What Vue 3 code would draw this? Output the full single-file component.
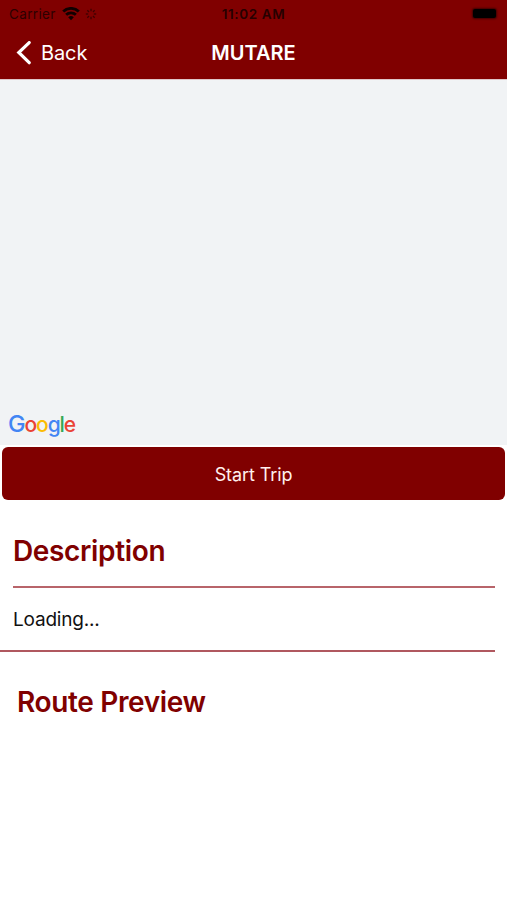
<script setup>
import { ref } from 'vue'

const title = ref('MUTARE')
const description = ref('Loading...')

const logo = [
  { char: 'G', color: '#4285f4' },
  { char: 'o', color: '#ea4335' },
  { char: 'o', color: '#fbbc05' },
  { char: 'g', color: '#4285f4' },
  { char: 'l', color: '#34a853' },
  { char: 'e', color: '#ea4335' }
]

const rays = [0, 45, 90, 135, 180, 225, 270, 315]
</script>

<template>
  <div class="screen">
    <header class="header">
      <div class="status-bar">
        <div class="status-left">
          <span class="carrier">Carrier</span>
          <svg class="wifi" width="18" height="14" viewBox="0 0 18 14">
            <path d="M1.2 4.6a11 11 0 0 1 15.6 0" />
            <path d="M4.1 7.8a7 7 0 0 1 9.8 0" />
            <path class="wifi-dot" d="M9 13.2 6.2 10.3a4 4 0 0 1 5.6 0z" />
          </svg>
          <svg class="spinner" width="12" height="12" viewBox="-6 -6 12 12">
            <line
              v-for="ray in rays"
              :key="ray"
              x1="0"
              y1="-2.8"
              x2="0"
              y2="-5.2"
              :transform="`rotate(${ray})`"
            />
          </svg>
        </div>
        <span class="time">11:02 AM</span>
        <div class="status-right">
          <div class="battery"></div>
        </div>
      </div>
      <nav class="nav-bar">
        <div class="back">
          <svg width="15" height="24" viewBox="0 0 15 24">
            <path d="M13.2 1.6 2.8 11.5l10.4 10.2" />
          </svg>
          <span>Back</span>
        </div>
        <h1 class="title">{{ title }}</h1>
        <div></div>
      </nav>
    </header>

    <div class="map">
      <div class="logo">
        <span v-for="(letter, i) in logo" :key="i" :style="{ color: letter.color }">{{ letter.char }}</span>
      </div>
    </div>

    <button class="start-button">Start Trip</button>

    <section class="description">
      <h2 class="heading">Description</h2>
      <p class="description-text">{{ description }}</p>
    </section>

    <section class="preview">
      <h2 class="heading">Route Preview</h2>
    </section>
  </div>
</template>

<style>
body {
  margin: 0;
  background-color: #fff;
}
</style>

<style scoped>
.screen {
  display: flex;
  flex-direction: column;
  height: 900px;
  overflow: hidden;
  background-color: #fff;
  font-family: Inter, 'Liberation Sans', sans-serif;
}
.header {
  box-sizing: border-box;
  height: 80px;
  border-bottom: 1px solid #dfc6c8;
  background-color: #800000;
}
.status-bar {
  display: grid;
  grid-template-columns: 1fr auto 1fr;
  align-items: center;
  height: 27px;
  color: #260000;
  font-size: 13.5px;
}
.status-left {
  display: flex;
  align-items: center;
  padding-left: 9px;
}
.carrier {
  width: 53px;
  letter-spacing: 0.35px;
  color: #2c0000;
}
.wifi {
  fill: none;
  stroke: #100000;
  stroke-width: 2.8;
}
.wifi .wifi-dot {
  fill: #100000;
  stroke: none;
}
.spinner {
  margin-left: 5px;
  stroke: #3c0000;
  stroke-width: 1.3;
}
.time {
  font-weight: 600;
  letter-spacing: 0.6px;
}
.status-right {
  display: flex;
  justify-content: flex-end;
  padding-right: 11px;
}
.battery {
  width: 23px;
  height: 9px;
  border-radius: 2px;
  background-color: #000;
  box-shadow: 0 0 2px 1px #400000;
}
.nav-bar {
  display: grid;
  grid-template-columns: 1fr auto 1fr;
  align-items: center;
  height: 51px;
  color: #fff;
}
.back {
  display: flex;
  align-items: center;
  padding-left: 16px;
  gap: 10px;
  font-size: 20px;
  letter-spacing: -0.1px;
}
.back svg {
  fill: none;
  stroke: #fff;
  stroke-width: 3.2;
  stroke-linecap: round;
}
.title {
  margin: 0;
  font-size: 20px;
  font-weight: 600;
}
.map {
  display: flex;
  align-items: flex-end;
  height: 365px;
  background-color: #f1f3f5;
}
.logo {
  display: flex;
  align-items: baseline;
  padding: 0 0 6px 8px;
  font-size: 21px;
  font-weight: 500;
  letter-spacing: -1.1px;
  line-height: 28px;
}
.logo span:first-child {
  font-size: 23.5px;
}
.start-button {
  height: 53px;
  margin: 2px 2px 0;
  padding: 1px 0 0;
  border: none;
  border-radius: 6px;
  background-color: #800000;
  color: #fff0ee;
  font-family: inherit;
  font-size: 18px;
  letter-spacing: -0.1px;
}
.heading {
  margin: 0;
  color: #800000;
  font-size: 28px;
  font-weight: 600;
  letter-spacing: -0.35px;
  line-height: 34px;
}
.description {
  margin-right: 12px;
  padding-top: 34px;
  border-bottom: 2px solid #b0585f;
}
.description .heading {
  margin-left: 13px;
  padding-bottom: 18px;
  border-bottom: 2px solid #b8646a;
}
.description-text {
  margin: 0;
  padding: 2px 0 0 13px;
  color: #111;
  font-size: 19px;
  letter-spacing: -0.2px;
  line-height: 60px;
}
.preview {
  padding: 33px 17px 0;
}
</style>
